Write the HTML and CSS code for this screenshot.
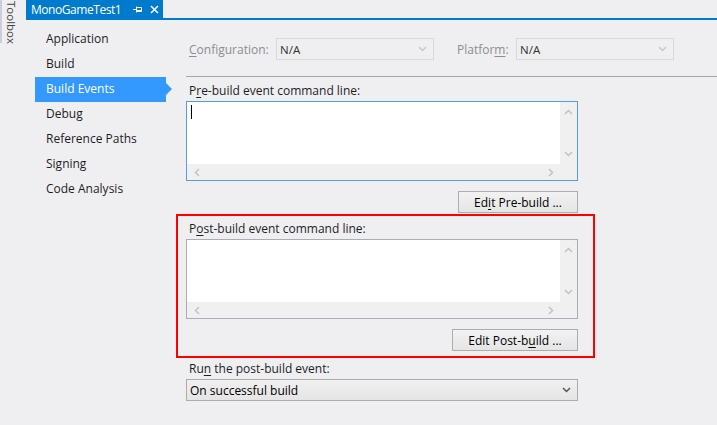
FILE: index.html
```html
<!DOCTYPE html>
<html>
<head>
<meta charset="utf-8">
<link rel="stylesheet" href="styles.css">
</head>
<body>
<div class="window">
  <div class="toolbox"><span class="toolbox-label">Toolbox</span></div>
  <div class="main">
    <div class="tabbar">
      <div class="tab">
        <span class="tab-title">MonoGameTest1</span>
        <svg class="tab-icon pin" width="9" height="9" viewBox="0 0 9 9"><path d="M0 4.5H3.5" stroke="#fff" stroke-width="1"/><path d="M3.5 1.5V7.5" stroke="#fff" stroke-width="1"/><path d="M3.5 2.5H8.5V6.5H3.5" fill="none" stroke="#fff" stroke-width="1"/><path d="M3.5 5.5H8.5" stroke="#fff" stroke-width="1"/></svg>
        <svg class="tab-icon close" width="9" height="9" viewBox="0 0 9 9"><path d="M1 1L8 8M8 1L1 8" stroke="#fff" stroke-width="1.6"/></svg>
      </div>
    </div>
    <div class="body">
      <ul class="nav">
        <li class="nav-item">Application</li>
        <li class="nav-item">Build</li>
        <li class="nav-item active">Build Events</li>
        <li class="nav-item">Debug</li>
        <li class="nav-item">Reference Paths</li>
        <li class="nav-item">Signing</li>
        <li class="nav-item">Code Analysis</li>
      </ul>
      <div class="panel">
        <div class="config-row">
          <span class="disabled-label"><u>C</u>onfiguration:</span>
          <div class="select disabled config-select"><span>N/A</span><svg class="chev" width="9" height="6" viewBox="0 0 9 6"><path d="M1 1L4.5 4.5L8 1" fill="none" stroke="#c8c8c8" stroke-width="1.5"/></svg></div>
          <span class="disabled-label platform-label">Platfor<u>m</u>:</span>
          <div class="select disabled config-select"><span>N/A</span><svg class="chev" width="9" height="6" viewBox="0 0 9 6"><path d="M1 1L4.5 4.5L8 1" fill="none" stroke="#c8c8c8" stroke-width="1.5"/></svg></div>
        </div>
        <div class="separator"></div>
        <div class="column">
          <div class="label">P<u>r</u>e-build event command line:</div>
          <div class="textbox focused">
            <div class="text-area"><span class="caret"></span></div>
            <div class="vscroll">
              <svg width="9" height="6" viewBox="0 0 9 6"><path d="M1 5L4.5 1.5L8 5" fill="none" stroke="#c2c2c2" stroke-width="1.5"/></svg>
              <svg width="9" height="6" viewBox="0 0 9 6"><path d="M1 1L4.5 4.5L8 1" fill="none" stroke="#c2c2c2" stroke-width="1.5"/></svg>
            </div>
            <div class="hscroll">
              <svg width="6" height="9" viewBox="0 0 6 9"><path d="M5 1L1.5 4.5L5 8" fill="none" stroke="#c2c2c2" stroke-width="1.5"/></svg>
              <svg width="6" height="9" viewBox="0 0 6 9"><path d="M1 1L4.5 4.5L1 8" fill="none" stroke="#c2c2c2" stroke-width="1.5"/></svg>
            </div>
          </div>
          <div class="button-row"><button class="btn pre-btn">Ed<u>i</u>t Pre-build ...</button></div>
        </div>
        <div class="highlight-box">
          <div class="column">
            <div class="label">P<u>o</u>st-build event command line:</div>
            <div class="textbox">
              <div class="text-area"></div>
              <div class="vscroll">
                <svg width="9" height="6" viewBox="0 0 9 6"><path d="M1 5L4.5 1.5L8 5" fill="none" stroke="#c2c2c2" stroke-width="1.5"/></svg>
                <svg width="9" height="6" viewBox="0 0 9 6"><path d="M1 1L4.5 4.5L8 1" fill="none" stroke="#c2c2c2" stroke-width="1.5"/></svg>
              </div>
              <div class="hscroll">
                <svg width="6" height="9" viewBox="0 0 6 9"><path d="M5 1L1.5 4.5L5 8" fill="none" stroke="#c2c2c2" stroke-width="1.5"/></svg>
                <svg width="6" height="9" viewBox="0 0 6 9"><path d="M1 1L4.5 4.5L1 8" fill="none" stroke="#c2c2c2" stroke-width="1.5"/></svg>
              </div>
            </div>
            <div class="button-row"><button class="btn post-btn">Edit Post-b<u>u</u>ild ...</button></div>
          </div>
        </div>
        <div class="column">
          <div class="label run-label">Ru<u>n</u> the post-build event:</div>
          <div class="select run-select"><span>On successful build</span><svg class="chev" width="9" height="6" viewBox="0 0 9 6"><path d="M1 1L4.5 4.5L8 1" fill="none" stroke="#555" stroke-width="1.5"/></svg></div>
        </div>
      </div>
    </div>
  </div>
</div>
</body>
</html>
```

FILE: styles.css
```css
* { box-sizing: border-box; }
html, body { margin: 0; padding: 0; }
body {
  background: #efeff2;
  font-family: "Open Sans", "Noto Sans", sans-serif;
  font-size: 11.5px;
  color: #1e1e1e;
  width: 717px;
  height: 425px;
  overflow: hidden;
}
u { text-decoration: underline; text-underline-offset: 2px; }
.window { display: flex; height: 425px; }
.toolbox {
  width: 26px;
  flex: none;
  position: relative;
}
.toolbox::before {
  content: "";
  position: absolute;
  left: 0; top: 0;
  width: 2px; height: 43px;
  background: #cccedb;
}
.toolbox-label {
  display: block;
  writing-mode: vertical-rl;
  margin-left: 4px;
  margin-top: 1px;
  color: #444;
  font-size: 11.5px;
  line-height: 14px;
}
.main { flex: 1; display: flex; flex-direction: column; }
.tabbar {
  height: 20px;
  border-bottom: 2px solid #007acc;
  display: flex;
}
.tab {
  background: #007acc;
  color: #fff;
  width: 137px;
  height: 18px;
  display: flex;
  align-items: center;
  padding-left: 5px;
  font-size: 12px;
  letter-spacing: -0.45px;
}
.tab-title { width: 102px; }
.pin { margin-right: 8px; }
.body { display: flex; flex: 1; }
.nav {
  list-style: none;
  margin: 0;
  padding: 7px 0 0 9px;
  width: 150px;
  flex: none;
}
.nav-item {
  height: 25px;
  line-height: 24px;
  padding-left: 11px;
  width: 131px;
  font-size: 12px;
  position: relative;
}
.nav-item.active {
  background: #3399ff;
  color: #fff;
}
.nav-item.active::after {
  content: "";
  position: absolute;
  right: -6px;
  top: 6px;
  border-left: 6px solid #3399ff;
  border-top: 6px solid transparent;
  border-bottom: 6px solid transparent;
}
.panel {
  flex: 1;
  padding-left: 10px;
  display: flex;
  flex-direction: column;
}
.config-row {
  display: flex;
  align-items: center;
  height: 22px;
  margin-top: 18px;
  padding-left: 3px;
}
.disabled-label { color: #8d8d8d; width: 87px; font-size: 12px; }
.platform-label { width: 59px; margin-left: 23px; }
.select {
  display: flex;
  align-items: center;
  justify-content: space-between;
  height: 22px;
  padding: 0 6px 0 3px;
}
.select.disabled {
  width: 158px;
  border: 1px solid #d9d9d9;
  background: #efefef;
  color: #333;
}
.separator {
  margin-top: 16px;
  height: 1px;
  background: #a5a5a5;
}
.column { width: 392px; display: flex; flex-direction: column; }
.label {
  height: 16px;
  line-height: 16px;
  margin-top: 6px;
  margin-bottom: 2px;
  padding-left: 3px;
  font-size: 12px;
}
.textbox {
  height: 80px;
  border: 1px solid #abadb3;
  background: #f0f0f0;
  display: grid;
  grid-template-columns: 1fr 17px;
  grid-template-rows: 62px 16px;
}
.textbox.focused { border-color: #569de5; }
.text-area { background: #fff; padding: 3px 4px; }
.caret { display: block; width: 1px; height: 14px; background: #000; }
.vscroll {
  display: flex;
  flex-direction: column;
  align-items: center;
  justify-content: space-between;
  padding: 7px 0 7px;
}
.hscroll {
  grid-column: 1 / span 2;
  display: flex;
  align-items: center;
  justify-content: space-between;
  padding: 0 23px 0 7px;
}
.button-row { display: flex; justify-content: flex-end; margin-top: 10px; }
.btn {
  font-family: inherit;
  font-size: 12px;
  color: #000;
  height: 22px;
  border: 1px solid #adadad;
  background: linear-gradient(#f2f2f2, #e5e5e5);
  padding: 0;
}
.pre-btn { width: 120px; }
.post-btn { width: 126px; }
.highlight-box {
  margin-left: -10px;
  margin-top: 1px;
  width: 419px;
  border: 2px solid #ff0000;
  padding: 5px 0 5px 8px;
}
.highlight-box .label { margin-top: 0; }
.run-label { margin-top: 3px; }
.run-select {
  border: 1px solid #acacac;
  background: linear-gradient(#f0f0f0, #e5e5e5);
  color: #000;
  font-size: 12px;
  width: 392px;
}
```
